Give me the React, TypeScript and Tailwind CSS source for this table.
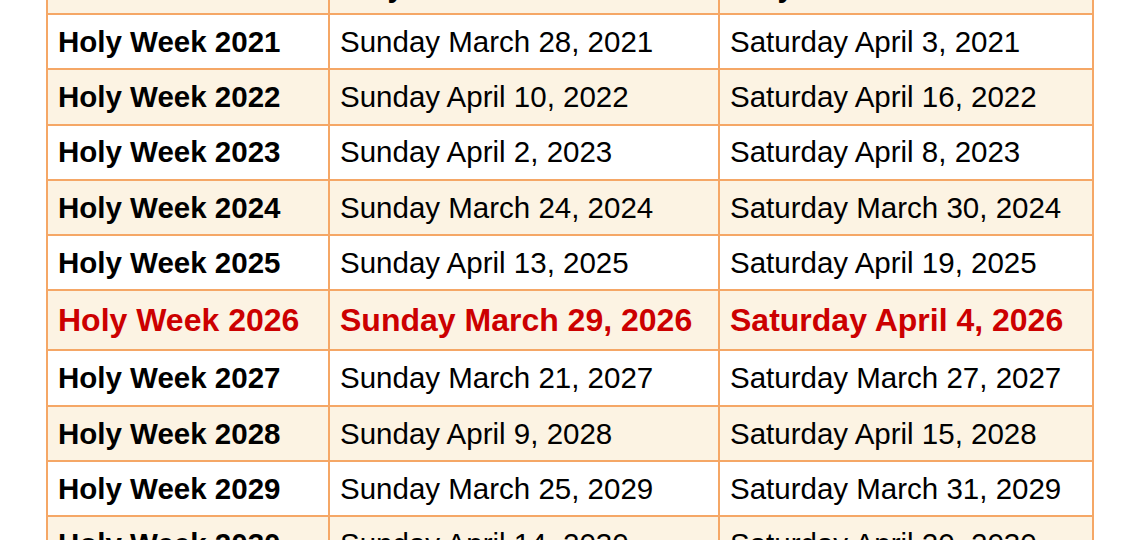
const rows = [
  { year: 2021, start: 'Sunday March 28, 2021', end: 'Saturday April 3, 2021' },
  { year: 2022, start: 'Sunday April 10, 2022', end: 'Saturday April 16, 2022' },
  { year: 2023, start: 'Sunday April 2, 2023', end: 'Saturday April 8, 2023' },
  { year: 2024, start: 'Sunday March 24, 2024', end: 'Saturday March 30, 2024' },
  { year: 2025, start: 'Sunday April 13, 2025', end: 'Saturday April 19, 2025' },
  { year: 2026, start: 'Sunday March 29, 2026', end: 'Saturday April 4, 2026' },
  { year: 2027, start: 'Sunday March 21, 2027', end: 'Saturday March 27, 2027' },
  { year: 2028, start: 'Sunday April 9, 2028', end: 'Saturday April 15, 2028' },
  { year: 2029, start: 'Sunday March 25, 2029', end: 'Saturday March 31, 2029' },
  { year: 2030, start: 'Sunday April 14, 2030', end: 'Saturday April 20, 2030' },
];

function App() {
  return (
    <div className="h-[540px] w-[1140px] overflow-hidden bg-white font-['Liberation_Sans',Arial,sans-serif] text-black">
      <table className="ml-[46px] -mt-[42px] table-fixed border-collapse text-[29.5px] leading-none">
        <colgroup>
          <col className="w-[282px]" />
          <col className="w-[390px]" />
          <col className="w-[374px]" />
        </colgroup>
        <thead>
          <tr className="h-[55px] bg-[#fcf3e3]">
            <th className="border-2 border-[#f5a766] px-[10px] text-left font-bold">Year</th>
            <th className="border-2 border-[#f5a766] px-[10px] text-left font-bold">Holy Week Starts</th>
            <th className="border-2 border-[#f5a766] px-[10px] text-left font-bold">Holy Week Ends</th>
          </tr>
        </thead>
        <tbody>
          {rows.map((r, i) => {
            const hot = r.year === 2026;
            return (
              <tr
                key={r.year}
                className={
                  (i % 2 === 1 ? 'bg-[#fcf3e3] ' : 'bg-white ') +
                  (hot ? 'h-[60px] text-[32px] font-bold text-[#cc0000]' : 'h-[55.3px]')
                }
              >
                <td className="border-2 border-[#f5a766] px-[10px] font-bold">Holy Week {r.year}</td>
                <td className="border-2 border-[#f5a766] px-[10px]">{r.start}</td>
                <td className="border-2 border-[#f5a766] px-[10px]">{r.end}</td>
              </tr>
            );
          })}
        </tbody>
      </table>
    </div>
  );
}

export default App;
